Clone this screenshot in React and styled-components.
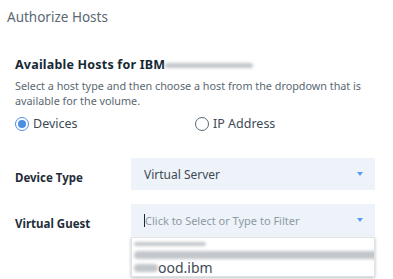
import React, { useState } from "react";
import styled, { createGlobalStyle } from "styled-components";

const GlobalStyle = createGlobalStyle`
  html, body {
    margin: 0;
    padding: 0;
    background: #ffffff;
    font-family: "Noto Sans", "Open Sans", sans-serif;
    overflow: hidden;
  }
`;

function Select({ value, placeholder, open, children }) {
  return (
    <SelectWrap>
      <Field>
        {value ? (
          <Value>{value}</Value>
        ) : (
          <Placeholder>
            <Caret />
            {placeholder}
          </Placeholder>
        )}
        <Arrow />
      </Field>
      {open && <Menu>{children}</Menu>}
    </SelectWrap>
  );
}

function App() {
  const [type, setType] = useState("devices");
  return (
    <Page>
      <GlobalStyle />
      <Title>Authorize Hosts</Title>
      <Body>
        <Heading>
          Available Hosts for IBM<Smudge w={88} h={5} />
        </Heading>
        <Help>
          Select a host type and then choose a host from the dropdown that is
          available for the volume.
        </Help>
        <Radios>
          <Radio onClick={() => setType("devices")}>
            <Dot checked={type === "devices"} />
            Devices
          </Radio>
          <Radio onClick={() => setType("ip")}>
            <Dot checked={type === "ip"} />
            IP Address
          </Radio>
        </Radios>
        <Row>
          <Label>Device Type</Label>
          <Select value="Virtual Server" />
        </Row>
        <Row>
          <Label>Virtual Guest</Label>
          <Select placeholder="Click to Select or Type to Filter" open>
            <Option>
              <Smudge w={72} h={4} />
            </Option>
            <Option>
              <Smudge w={250} h={8} />
            </Option>
            <Option last>
              <Smudge w={24} h={8} />
              ood.ibm
            </Option>
          </Select>
        </Row>
      </Body>
    </Page>
  );
}

const Page = styled.div`
  width: 393px;
  height: 279px;
  overflow: hidden;
`;

const Title = styled.h1`
  margin: 0;
  padding: 7px 0 0 7px;
  font-size: 13.5px;
  font-weight: 400;
  line-height: 20px;
  color: #5a6872;
`;

const Body = styled.div`
  padding: 30px 18px 0 15px;
`;

const Heading = styled.div`
  display: flex;
  align-items: center;
  font-size: 12.5px;
  font-weight: 700;
  letter-spacing: 0.2px;
  color: #152935;
  line-height: 16px;
`;

const Smudge = styled.span`
  display: inline-block;
  flex-shrink: 0;
  width: ${(p) => p.w}px;
  height: ${(p) => p.h}px;
  border-radius: 4px;
  background: #c2c6ca;
  filter: blur(1.5px);
`;

const Help = styled.p`
  margin: 6px 0 0;
  font-size: 10.8px;
  line-height: 14.5px;
  color: #5a6872;
`;

const Radios = styled.div`
  display: grid;
  grid-template-columns: 180px auto;
  margin-top: 6px;
`;

const Radio = styled.label`
  display: flex;
  align-items: center;
  gap: 4px;
  font-size: 12.5px;
  line-height: 20px;
  color: #3d4a55;
  cursor: pointer;
`;

const Dot = styled.span`
  box-sizing: border-box;
  width: 14px;
  height: 14px;
  border-radius: 50%;
  border: 1.5px solid ${(p) => (p.checked ? "#4a90e2" : "#5a6872")};
  display: flex;
  align-items: center;
  justify-content: center;
  &::after {
    content: "";
    width: 8px;
    height: 8px;
    border-radius: 50%;
    background: ${(p) => (p.checked ? "#4a90e2" : "transparent")};
  }
`;

const Row = styled.div`
  display: grid;
  grid-template-columns: 116px 244px;
  align-items: start;
  margin-top: 24px;
  & + & {
    margin-top: 14px;
  }
`;

const Label = styled.div`
  font-size: 11.5px;
  font-weight: 700;
  line-height: 14px;
  color: #1f2d3a;
  padding-top: 13px;
`;

const SelectWrap = styled.div`
  position: relative;
`;

const Field = styled.div`
  height: 32px;
  display: flex;
  align-items: center;
  justify-content: space-between;
  padding: 0 12px 0 13px;
  background: #eef2f9;
  font-size: 12px;
`;

const Value = styled.span`
  color: #3d4a55;
`;

const Placeholder = styled.span`
  display: flex;
  align-items: center;
  font-size: 11px;
  color: #8c9ba5;
`;

const Caret = styled.span`
  width: 1px;
  height: 13px;
  background: #152935;
`;

const Arrow = styled.span`
  width: 0;
  height: 0;
  border-left: 3.5px solid transparent;
  border-right: 3.5px solid transparent;
  border-top: 4px solid #5a9cf0;
`;

const Menu = styled.div`
  position: absolute;
  top: 33px;
  left: 0;
  right: 0;
  background: #ffffff;
  border: 1px solid #dfe3e6;
  box-shadow: 0 1px 3px rgba(0, 0, 0, 0.25);
  overflow: hidden;
  z-index: 2;
`;

const Option = styled.div`
  height: ${(p) => (p.last ? 16 : 11)}px;
  display: flex;
  align-items: center;
  padding: 0 2px;
  font-size: 14px;
  line-height: 16px;
  color: #3d4a55;
`;

export default App;
